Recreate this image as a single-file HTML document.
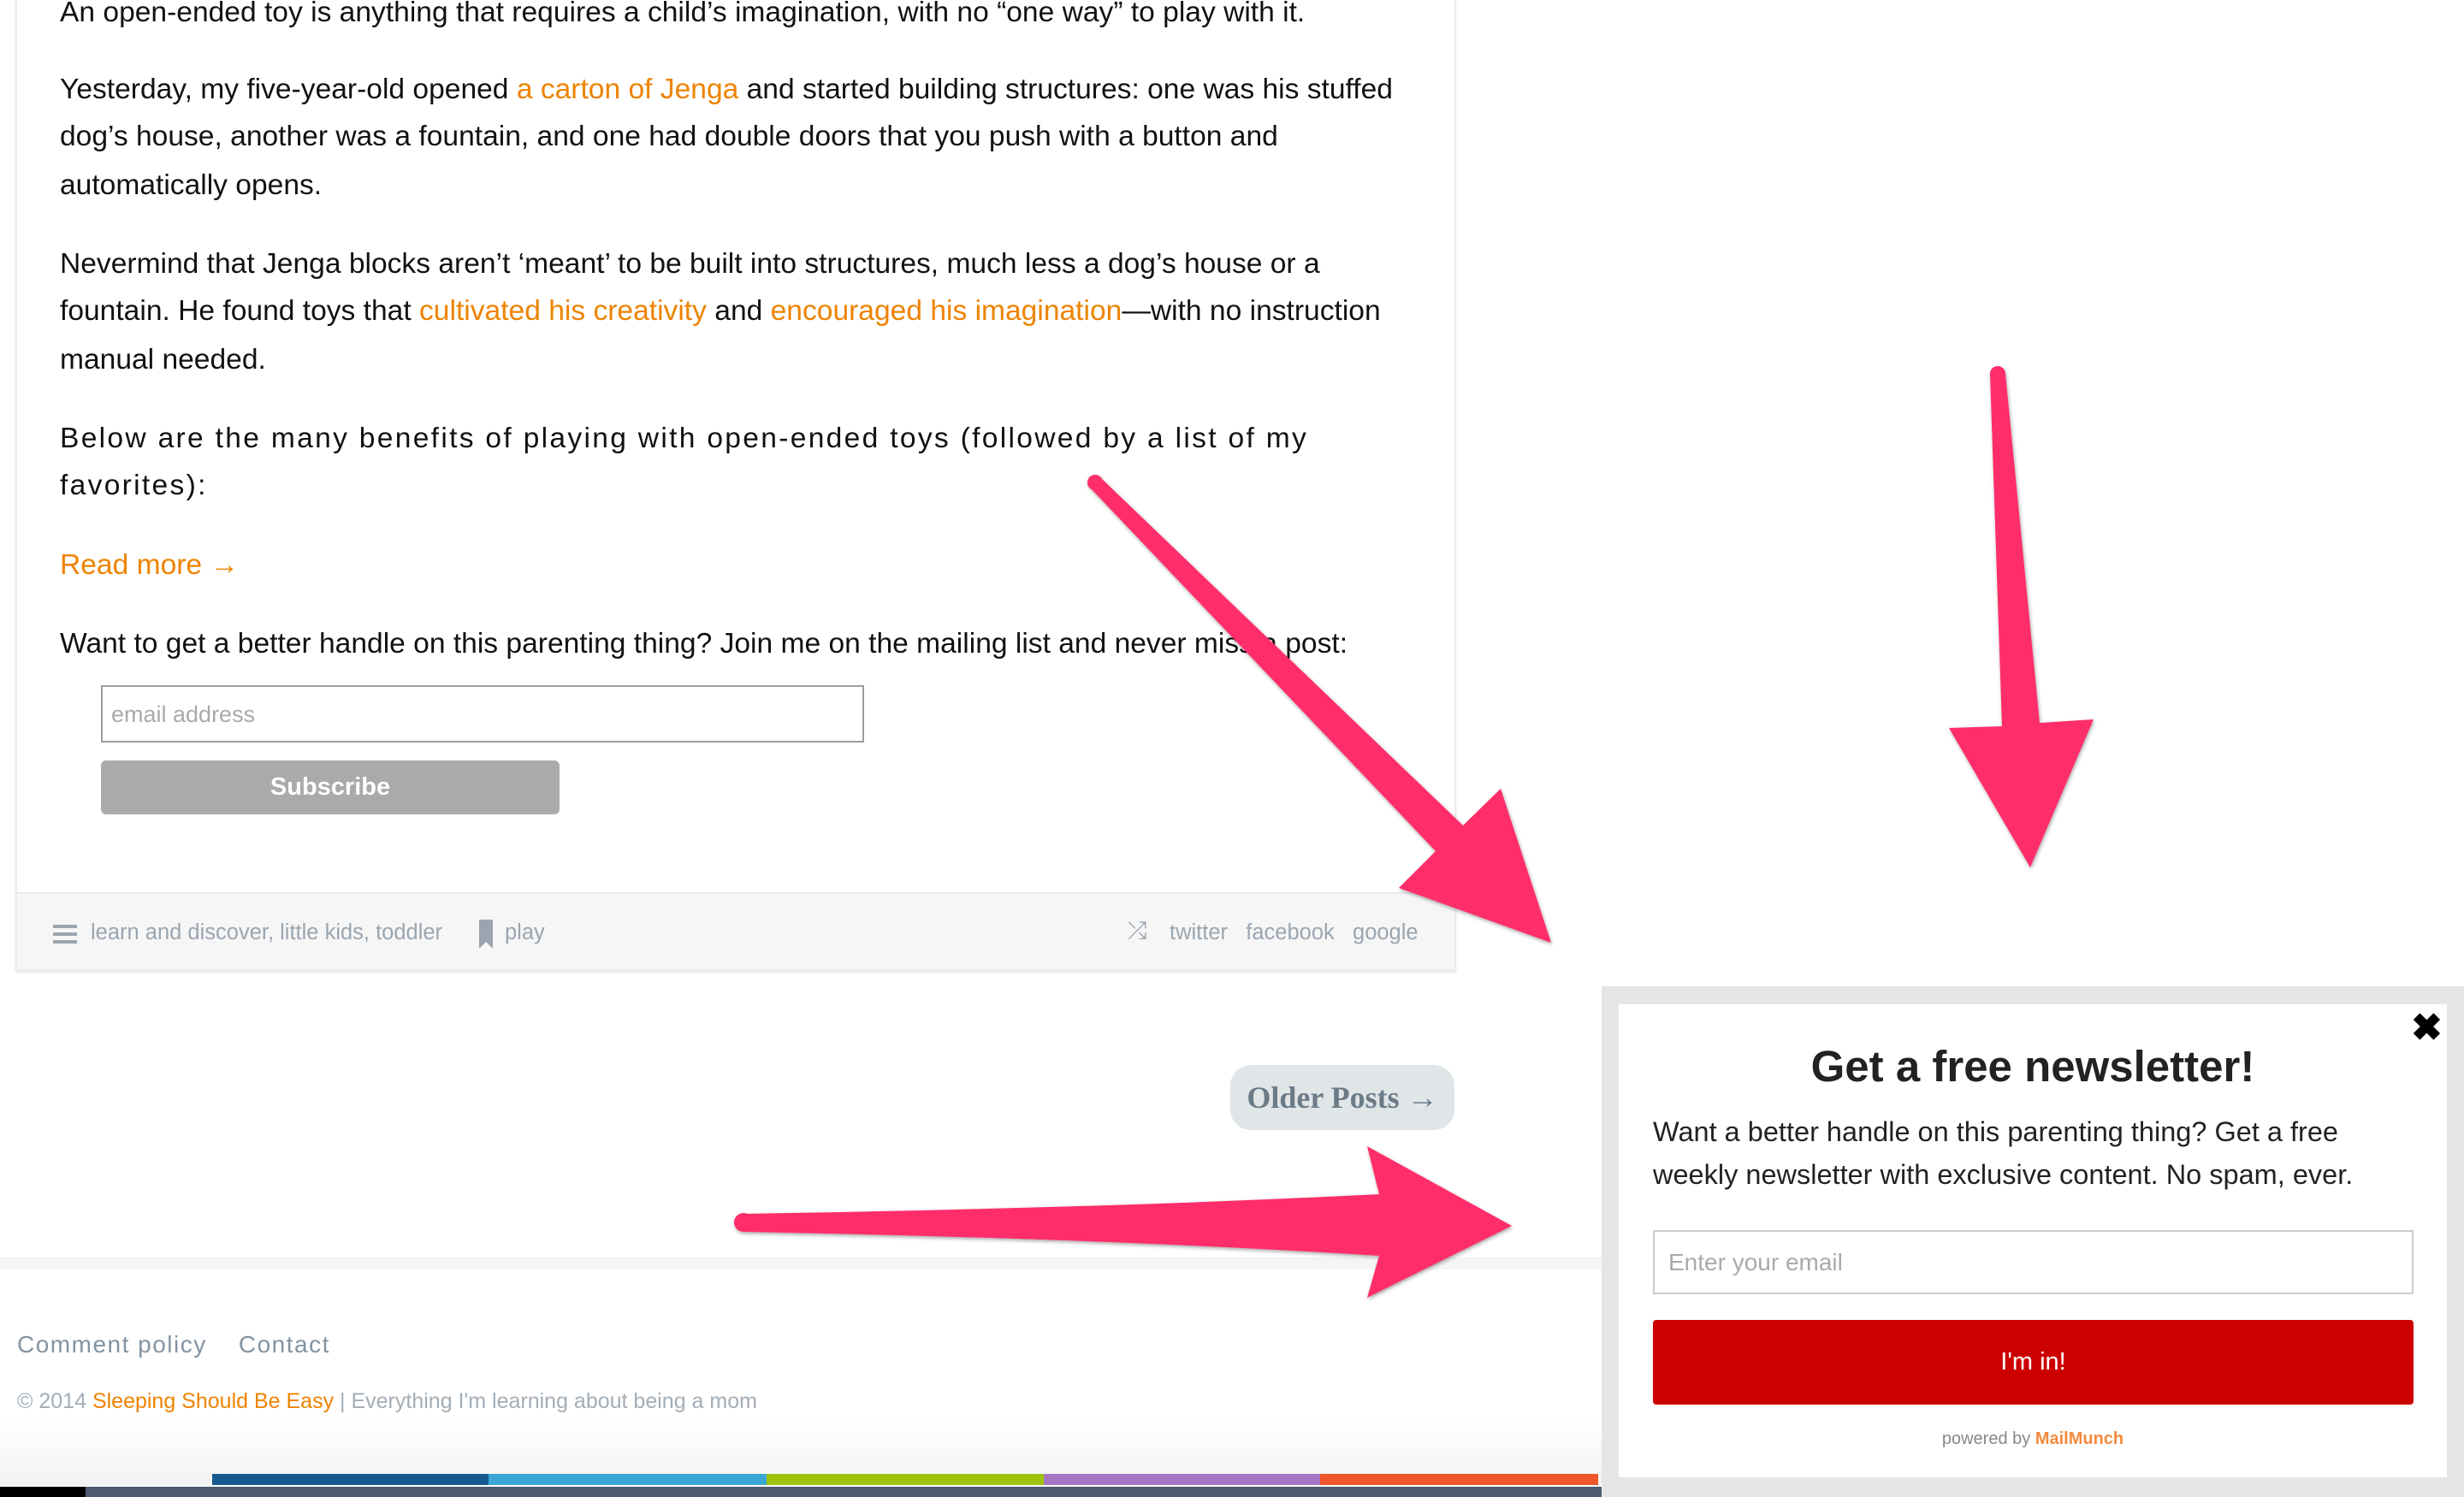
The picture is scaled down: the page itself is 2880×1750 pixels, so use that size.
<!DOCTYPE html>
<html><head><meta charset="utf-8"><style>
*{margin:0;padding:0;box-sizing:border-box}
body{width:2880px;height:1750px;overflow:hidden;background:#fff;position:relative;font-family:"Liberation Sans",sans-serif}
.l{position:absolute;left:70px;font-size:33.6px;line-height:56px;color:#111;white-space:nowrap}
.o{color:#ee8300}
.a{position:absolute;white-space:nowrap}
</style></head><body>
<div style="position:absolute;left:18px;top:-10px;width:1684px;height:1145px;border:2px solid #ececec;border-top:none;background:#fff;box-shadow:0 2px 3px #e6e6e6"></div>
<div style="position:absolute;left:20px;top:1043px;width:1680px;height:90px;background:#f6f6f6;border-top:2px solid #ebebeb"></div>

<div class="l" style="top:-13px">An open-ended toy is anything that requires a child’s imagination, with no “one way” to play with it.</div>
<div class="l" style="top:77px">Yesterday, my five-year-old opened <span class="o">a carton of Jenga</span> and started building structures: one was his stuffed</div>
<div class="l" style="top:132px">dog’s house, another was a fountain, and one had double doors that you push with a button and</div>
<div class="l" style="top:189px">automatically opens.</div>
<div class="l" style="top:281px">Nevermind that Jenga blocks aren’t ‘meant’ to be built into structures, much less a dog’s house or a</div>
<div class="l" style="top:336px">fountain. He found toys that <span class="o">cultivated his creativity</span> and <span class="o">encouraged his imagination</span>—with no instruction</div>
<div class="l" style="top:393px">manual needed.</div>
<div class="l" style="top:485px;letter-spacing:2.3px">Below are the many benefits of playing with open-ended toys (followed by a list of my</div>
<div class="l" style="top:540px;letter-spacing:2.3px">favorites):</div>
<div class="l o" style="top:633px">Read more →</div>
<div class="l" style="top:725px">Want to get a better handle on this parenting thing? Join me on the mailing list and never miss a post:</div>

<div style="position:absolute;left:118px;top:801px;width:892px;height:67px;border:2px solid #9e9e9e;background:#fff;font-size:27px;color:#aaa;padding:14px 10px;line-height:36px">email address</div>
<div style="position:absolute;left:118px;top:889px;width:536px;height:63px;background:#aaa;border-radius:6px;color:#fff;font-weight:bold;font-size:29px;text-align:center;line-height:63px">Subscribe</div>

<svg class="a" style="left:62px;top:1080px" width="28" height="24"><rect y="1" width="28" height="4" fill="#9aa5b0"/><rect y="10" width="28" height="4" fill="#9aa5b0"/><rect y="19" width="28" height="4" fill="#9aa5b0"/></svg>
<div class="a" style="left:106px;top:1076px;font-size:25.5px;color:#9aa5b0">learn and discover, little kids, toddler</div>
<svg class="a" style="left:560px;top:1075px" width="16" height="34"><path d="M0 0H16V34L8 26L0 34Z" fill="#9aa5b0"/></svg>
<div class="a" style="left:590px;top:1076px;font-size:25.5px;color:#9aa5b0">play</div>
<div class="a" style="left:1318px;top:1072px;font-size:28px;color:#9aa5b0">⤮</div>
<div class="a" style="left:1367px;top:1076px;font-size:25.5px;color:#9aa5b0">twitter&nbsp;&nbsp; facebook&nbsp;&nbsp; google</div>

<div style="position:absolute;left:1438px;top:1245px;width:262px;height:76px;background:#e0e5e8;border-radius:24px;color:#6b7b88;font-family:'Liberation Serif',serif;font-weight:bold;font-size:36px;text-align:center;line-height:76px">Older Posts →</div>

<div style="position:absolute;left:0;top:1470px;width:2880px;height:14px;background:#f5f5f5;border-top:1px solid #eee"></div>
<div style="position:absolute;left:0;top:1660px;width:2880px;height:76px;background:linear-gradient(#fff,#f2f2f2)"></div>
<div class="a" style="left:20px;top:1556px;font-size:28px;color:#8393a2;letter-spacing:1.5px">Comment policy&nbsp;&nbsp;&nbsp; Contact</div>
<div class="a" style="left:20px;top:1624px;font-size:25px;color:#a3adb6">© 2014 <span class="o">Sleeping Should Be Easy</span> | Everything I'm learning about being a mom</div>
<div style="position:absolute;top:1723px;left:248px;width:323px;height:13px;background:#175a8e"></div>
<div style="position:absolute;top:1723px;left:571px;width:325px;height:13px;background:#3aa6d4"></div>
<div style="position:absolute;top:1723px;left:896px;width:324px;height:13px;background:#9ec20c"></div>
<div style="position:absolute;top:1723px;left:1220px;width:323px;height:13px;background:#a574c2"></div>
<div style="position:absolute;top:1723px;left:1543px;width:325px;height:13px;background:#f1562b"></div>
<div style="position:absolute;top:1723px;left:2191px;width:325px;height:13px;background:#175a8e"></div>
<div style="position:absolute;top:1723px;left:2516px;width:324px;height:13px;background:#3aa6d4"></div>
<div style="position:absolute;top:1723px;left:2840px;width:40px;height:13px;background:#9ec20c"></div>
<div style="position:absolute;top:1738px;left:0;width:2880px;height:12px;background:#4d5a70"></div>
<div style="position:absolute;top:1738px;left:0;width:100px;height:12px;background:#000"></div>

<div style="position:absolute;left:1872px;top:1153px;width:1008px;height:597px;background:#e5e5e5"></div>
<div style="position:absolute;left:1892px;top:1174px;width:968px;height:553px;background:#fff"></div>
<div class="a" style="left:2818px;top:1176px;font-size:44px;font-weight:bold;color:#000">✖</div>
<div class="a" style="left:1892px;width:968px;text-align:center;top:1217px;font-size:51px;font-weight:bold;color:#222">Get a free newsletter!</div>
<div class="a" style="left:1932px;top:1298px;font-size:32.5px;line-height:50px;color:#222">Want a better handle on this parenting thing? Get a free<br>weekly newsletter with exclusive content. No spam, ever.</div>
<div style="position:absolute;left:1932px;top:1438px;width:889px;height:75px;border:2px solid #ccc;font-size:28px;color:#aaa;padding:0 16px;line-height:71px">Enter your email</div>
<div style="position:absolute;left:1932px;top:1543px;width:889px;height:99px;background:#cd0000;border-radius:4px;color:#fff;font-size:29px;text-align:center;line-height:99px">I'm in!</div>
<div class="a" style="left:1892px;width:968px;text-align:center;top:1671px;font-size:20px;color:#888">powered by <b style="color:#f38a3b">MailMunch</b></div>

<svg class="a" style="left:0;top:0" width="2880" height="1750">
<defs><filter id="s" x="-10%" y="-10%" width="120%" height="120%"><feDropShadow dx="1" dy="2" stdDeviation="2" flood-color="#000" flood-opacity=".35"/></filter></defs>
<g fill="#ff2d6b" filter="url(#s)">
<path d="M1286 558L1710 965L1754 922L1813 1102L1635 1038L1678 995L1274 570Z"/>
<circle cx="1280" cy="564" r="9"/>
<path d="M2326 437L2344 437L2384 845L2447 841L2373 1014L2278 851L2340 849Z"/>
<circle cx="2335" cy="437" r="9"/>
<path d="M869 1419Q1300 1412 1612 1396L1598 1340L1767 1433L1598 1517L1612 1468Q1300 1448 869 1440Z"/>
<circle cx="869" cy="1429" r="11"/>
</g></svg>
</body></html>
